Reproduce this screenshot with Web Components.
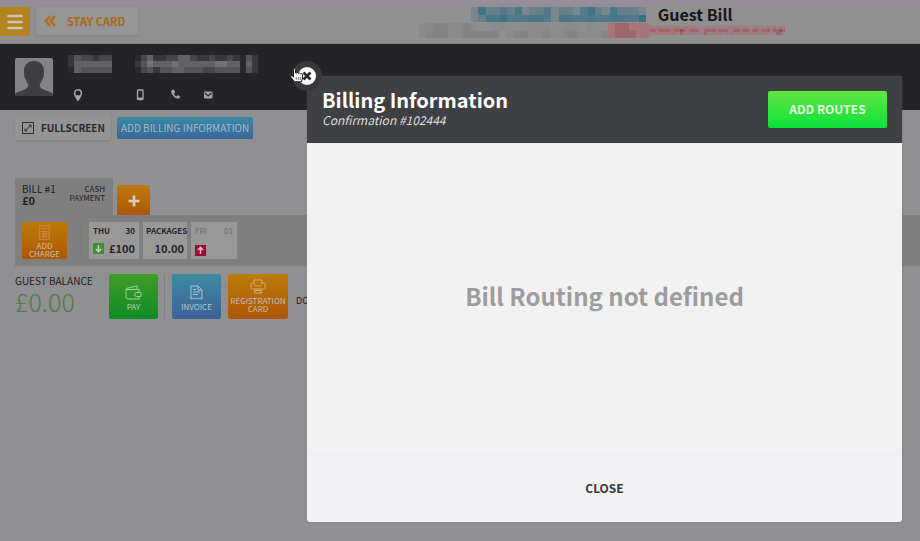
<!DOCTYPE html>
<html lang="en">
<head>
<meta charset="utf-8">
<title>Guest Bill</title>
<style>
html, body { height: 100%; }
body { margin: 0; background: #909092; color: #202022; font-family: "Noto Sans CJK SC", "Open Sans", sans-serif; overflow: hidden; }
</style>
</head>
<body>
<bill-page></bill-page>
<script>
const define = (name, html, setup) => {
  const template = document.createElement('template');
  template.innerHTML = '<style>*{box-sizing:border-box}button{font:inherit;color:inherit;border:0;margin:0;padding:0;cursor:pointer}svg{display:block}</style>' + html;
  customElements.define(name, class extends HTMLElement {
    constructor() {
      super();
      this.attachShadow({ mode: 'open' }).append(template.content.cloneNode(true));
    }
    connectedCallback() { if (setup) setup(this); }
  });
};

/* Redacted text: a grid of cells, one palette letter each, rows split by "/". */
const palette = {
  a: '#29292b', b: '#38383a', c: '#474648', d: '#545355', e: '#626163', f: '#737274',
  A: '#3f7480', B: '#4a7886', C: '#55798a', D: '#667f8b', E: '#7a868b', F: '#2f7487',
  g: '#8a8a8a', h: '#858584', i: '#8f8c91', r: '#a0666e', s: '#a6767c', t: '#94525c', u: '#9a8088'
};
define('pixel-mosaic', '<style>:host{display:block}svg{width:100%;height:100%}</style><svg preserveAspectRatio="none" shape-rendering="crispEdges" aria-hidden="true"></svg>', el => {
  const rows = el.getAttribute('cells').split('/');
  const svg = el.shadowRoot.querySelector('svg');
  svg.setAttribute('viewBox', '0 0 ' + rows[0].length + ' ' + rows.length);
  svg.innerHTML = rows.map((row, y) => [...row].map((c, x) =>
    palette[c] ? `<rect x="${x}" y="${y}" width="1" height="1" fill="${palette[c]}"/>` : '').join('')).join('');
});

define('app-header', `
<style>
:host{display:flex;align-items:flex-start;height:44px;padding-top:6px;border-top:1px solid #9a86a6;border-bottom:1px solid #838384;background:linear-gradient(#948f96,#909091 5px)}
.menu{width:30px;height:29px;background:#b58420;border-radius:0 2px 2px 0;display:grid;place-items:center}
.back{display:flex;align-items:center;gap:11px;height:28px;margin-left:6px;padding:0 13px 0 8px;background:#969697;border-radius:3px;box-shadow:0 1px 2px #7779;color:#a9690f;font-size:11px;font-weight:700;line-height:16px}
.who{flex:1;margin-left:145px;display:flex;flex-direction:column;align-items:center;margin-top:-3px}
.row{display:flex;gap:12px;align-items:center;height:20px}
h1{margin:0;font-size:16px;line-height:20px;font-weight:700;color:#171719}
.blue{width:175px;height:15px}
.warn{display:flex;align-items:flex-start;height:16px;margin-top:-1px}
.grey{width:189px;height:15px}.pink{width:42px;height:15px}.red{width:135px;height:9px;margin-top:3px}
</style>
<button class="menu" aria-label="Menu"><svg width="16" height="16" viewBox="0 0 16 16" stroke="#c9c4b4" stroke-width="2.6" stroke-linecap="round"><path d="M1.5 2h13M1.5 8h13M1.5 14h13"/></svg></button>
<button class="back"><svg width="12" height="12" viewBox="0 0 12 12" fill="none" stroke="#b4700f" stroke-width="2.4"><path d="M6 1L1.600 6 6 11M11 1L6.600 6 11 11"/></svg>STAY CARD</button>
<div class="who">
<div class="row"><pixel-mosaic class="blue" cells="EADDCDBEDDCEDDECADEBDDDE/EDBBACCCBBCEBBCCBCCBBCCF"></pixel-mosaic><h1>Guest Bill</h1></div>
<div class="warn"><pixel-mosaic class="grey" cells="gghhgghgiiggiiggggiiggigii/ghhhgghhhhh.ghhgghgghhggghi"></pixel-mosaic><pixel-mosaic class="pink" cells="srrsss/srrrss"></pixel-mosaic><pixel-mosaic class="red" cells="sussususssussusuuuusususuusussusuuusuuusususu/rrsrrrrsrrtrsrrrsurrrrsrrrusrrsrrurrsrrrurrtr/ussssusssurussusuuruusssusususuussssuusuuurru"></pixel-mosaic></div>
</div>`);

define('guest-banner', `
<style>
:host{display:flex;gap:15px;height:66px;padding:14px 15px 0;background:#242426}
.avatar{width:38px;height:38px;border-radius:2px;flex:none}
.names{display:flex;gap:23px;margin-top:-3px;height:18px}
.first{width:44px}.last{width:123px}
.contact{margin:15px 0 0 4px}
</style>
<svg class="avatar" viewBox="0 0 38 38" role="img" aria-label="Guest photo"><rect width="38" height="38" fill="#858386"/><path d="M0 38v-2c2-3 10-3 13-7 1-2-1-4-2-7-2-3-2-5-2-9 0-6 4-10 10-10s10 4 10 10c0 4 0 6-2 9-1 3-3 5-2 7 3 4 11 4 13 7v2z" fill="#3e3f42"/></svg>
<div>
<div class="names"><pixel-mosaic class="first" cells="bdccbcc/beeeeee/aeddddd"></pixel-mosaic><pixel-mosaic class="last" cells="acebbcceecbbcbbcbadb/bdfeeefeeeeeeffeeaeb/acdbddeedddccddddadb"></pixel-mosaic></div>
<svg class="contact" width="160" height="14" viewBox="0 0 160 14" fill="none" stroke="#a6a6a7" stroke-width="1.500" aria-label="Contact details" role="img">
<path d="M6 1.800c-2 0-3.400 1.400-3.400 3.200C2.600 7.500 6 12 6 12s3.400-4.500 3.400-7C9.400 3.200 8 1.800 6 1.800z"/><path d="M4.500 8L6 11.500 7.500 8z" fill="#a6a6a7"/>
<rect x="65.500" y="2" width="5.500" height="9.600" rx=".8" stroke-width="1.300"/><path d="M65.500 10.600h5.500" stroke-width="2"/>
<path d="M99 2.500c.5 4.500 3.500 8 8 8.200l1.200-2.500-2.600-1-1.200 1.200c-1.400-.7-2-1.500-2.500-3l1.200-1.200-1.200-2.600z" fill="#a6a6a7" stroke="none"/>
<rect x="132" y="3.500" width="8.500" height="7" rx="1" fill="#a6a6a7" stroke="none"/><path d="M132.800 5l3.400 3 3.400-3" stroke="#242426" stroke-width="1.100"/>
</svg>
</div>`);

define('bill-toolbar', `
<style>
:host{display:flex;gap:6px;padding:6px 15px;align-items:center}
button{display:flex;align-items:center;height:24px;border-radius:2px;line-height:16px}
.full{gap:7px;padding:0 6px 0 7px;background:#949495;box-shadow:0 1px 2px #7778;font-size:10px;font-weight:700;color:#28282a}
.add{height:22px;padding:0 4px;background:linear-gradient(#3c87a2,#38689a);color:#a5bac8;font-size:10px;font-weight:400}
</style>
<button class="full"><svg width="12" height="12" viewBox="0 0 12 12" fill="none" stroke="#303032"><rect x=".5" y=".5" width="11" height="11"/><path d="M3 9l6-6M6.500 3H9v2.500M3 6.500V9h2.500"/></svg>FULLSCREEN</button>
<button class="add">ADD BILLING INFORMATION</button>`);

define('tile-button', `
<style>
:host{display:block;flex:none;height:45px;width:49px}
button{width:100%;height:100%;border-radius:2px;display:flex;flex-direction:column;align-items:center;justify-content:flex-start;padding-top:8px;gap:3px;font-size:8px;line-height:8px;color:#c9bfb0;background:linear-gradient(#bc7b08,#ad5606)}
:host([tone=green]) button{background:linear-gradient(#429b26,#0d8c26);color:#b1cfb1;padding-top:11px;gap:3px}
:host([tone=blue]) button{background:linear-gradient(#3d8ba2,#3c6296);color:#b4c5d1;padding-top:11px;gap:3px}
:host([tone=wide]){width:60px}
:host([tone=wide]) button{padding-top:5px}
:host([tone=charge]){width:45px;height:37px}
:host([tone=charge]) button{padding-top:3px;gap:2px}
:host([tone=plus]){width:33px;height:30px}
:host([tone=plus]) button{padding-top:10px;border-radius:2px 2px 0 0}
</style>
<button><slot name="icon"></slot><span><slot></slot></span></button>`);

define('day-card', `
<style>
:host{display:flex;flex-direction:column;justify-content:space-between;flex:none;width:50px;height:37px;padding:2px 4px 3px;background:#989899;color:#242426;font-size:8px;line-height:13px;font-weight:700;border-radius:1px}
:host([faded]){color:#6f6f70;font-weight:400;width:46px}
:host([narrow]){width:44px;padding-left:3px;padding-right:3px}
div{display:flex;justify-content:space-between}
.amount{font-size:11px;line-height:16px}
</style>
<div><slot name="day"></slot><slot name="date"></slot></div>
<div class="amount"><span><slot name="flag"></slot></span><span><slot></slot></span></div>`);

define('bill-panel', `
<style>
:host{display:block;padding:32px 0 0 15px}
.tabs{display:flex;align-items:flex-end;gap:4px;height:37px}
.tab{display:flex;justify-content:space-between;width:98px;height:37px;padding:5px 8px 0 7px;background:#7f7f80;color:#202022;text-align:left;font-size:10px;line-height:12px}
.tab b{display:block;font-size:11px;font-weight:700;line-height:11px}
.tab .type{text-align:right;font-size:8px;line-height:9px;padding-top:1px}
.body{display:flex;gap:4px;height:51px;padding:7px;background:#7f7f80}
hr{border:0;margin:0 3px 0 10px;width:1px;height:37px;background:#767677}
.flag{width:11px;height:11px;margin-top:3px}
</style>
<div class="tabs">
<button class="tab"><span>BILL #1<b>£0</b></span><span class="type">CASH<br>PAYMENT</span></button>
<tile-button tone="plus"><svg slot="icon" width="12" height="12" viewBox="0 0 12 12" stroke="#d6cec0" stroke-width="2.600" role="img" aria-label="Add bill"><path d="M6 .5v11M.5 6h11"/></svg></tile-button>
</div>
<div class="body">
<tile-button tone="charge"><svg slot="icon" width="11" height="15" viewBox="0 0 11 15" fill="none" stroke="#c98c48"><rect x=".8" y=".8" width="9.400" height="13.400"/><path d="M2.500 3.500h6M2.500 6.500h6M2.500 9h6M2.500 11.500h6M4.500 5.500v7M7 5.500v7"/></svg>ADD<br>CHARGE</tile-button>
<hr>
<day-card><span slot="day">THU</span><span slot="date">30</span><svg class="flag" slot="flag" viewBox="0 0 11 11" fill="none" stroke="#c4d6c0" stroke-width="1.500"><rect width="11" height="11" fill="#3d8f35" stroke="none"/><path d="M5.500 2v6.500M2.800 6l2.700 2.700L8.200 6"/></svg>£100</day-card>
<day-card narrow><span slot="day">PACKAGES</span>10.00</day-card>
<day-card faded><span slot="day">FRI</span><span slot="date">01</span><svg class="flag" slot="flag" viewBox="0 0 11 11" fill="none" stroke="#d9bcc4" stroke-width="1.500"><rect width="11" height="11" fill="#a3082e" stroke="none"/><path d="M5.500 9V2.500M2.800 5l2.700-2.700L8.200 5"/></svg></day-card>
</div>`);

define('guest-balance', `
<style>
:host{display:flex;padding:8px 15px;white-space:nowrap}
.sum{width:94px;font-size:10px;line-height:13px;flex:none}
.sum strong{display:block;font-size:25px;line-height:28px;font-weight:300;color:#4e7b4a}
hr{border:0;margin:0 7px 0 6px;width:1px;height:45px;background:#818182;flex:none}
.gap{margin-right:7px}
.docs{margin-left:8px;font-size:9px;line-height:14px;padding-top:20px}
</style>
<div class="sum">GUEST BALANCE<strong>£0.00</strong></div>
<tile-button tone="green"><svg slot="icon" width="17" height="15" viewBox="0 0 17 15" fill="none" stroke="#a9cfa1"><path d="M1 4.500h13v3M14 11.500V14H3c-1.300 0-2-.7-2-2V4.500C1 3.500 2 3 3 3l9-2.200V4M16 7.500h-4.500c-2.500 0-2.500 4 0 4H16z"/></svg>PAY</tile-button>
<hr>
<tile-button tone="blue" class="gap"><svg slot="icon" width="13" height="15" viewBox="0 0 13 15" fill="none" stroke="#a9c4d4"><path d="M1 1h7l4 4v9l-2-1-2 1-1.500-1L5 14l-2-1-2 1zM8 1v4h4M3 4.500h3M3 7h7M3 9.500h5"/></svg>INVOICE</tile-button>
<tile-button tone="wide"><svg slot="icon" width="16" height="15" viewBox="0 0 16 15" fill="none" stroke="#d0ad79"><path d="M4 5V1h8v4M4 4H2.500C1.500 4 1 4.500 1 5.500v3c0 1 .5 1.500 1.500 1.500h11c1 0 1.500-.5 1.500-1.500v-3c0-1-.5-1.500-1.500-1.500H12M4 5.500c0 2 8 2 8 0M4.500 11.500h7V14h-7z"/></svg>REGISTRATION<br>CARD</tile-button>
<span class="docs">DO</span>`);

define('billing-dialog', `
<style>
:host{position:absolute;inset:76px 18px 19px 307px;display:flex;flex-direction:column;background:#f2f1f3;border-radius:0 2px 3px 3px;box-shadow:0 0 2px #6668}
header{display:flex;align-items:center;justify-content:space-between;height:67px;padding:0 15px;background:#3f4043;color:#fff;flex:none}
h2{margin:0;font-size:20px;line-height:24px;font-weight:700}
p{margin:0 0 4px;font-size:12px;line-height:16px;font-style:italic;color:#dededf}
.routes{width:119px;height:37px;border-radius:2px;background:linear-gradient(#62e543,#0be23a);color:#e6fbe0;font-size:12px;font-weight:700;line-height:16px;padding-bottom:2px}
main{flex:1;display:grid;place-items:center;padding-bottom:6px;font-size:24px;line-height:32px;font-weight:700;color:#9d9c9e;background:#f2f2f3}
footer{height:67px;flex:none;display:grid;place-items:center;padding-bottom:2px;border-top:1px solid #efedf0}
footer button{background:none;padding:8px 16px;font-size:12px;line-height:16px;font-weight:700;color:#38383c}
.x{position:absolute;left:-15px;top:-15px;width:30px;height:30px;border-radius:50%;background:#38393c;display:grid;place-items:center}
.hand{position:absolute;left:-17px;top:-8px}
</style>
<header><div><h2>Billing Information</h2><p>Confirmation #102444</p></div><button class="routes">ADD ROUTES</button></header>
<main>Bill Routing not defined</main>
<footer><button>CLOSE</button></footer>
<button class="x" aria-label="Close dialog"><svg width="18" height="18" viewBox="0 0 18 18"><circle cx="9" cy="9" r="9" fill="#fff"/><path d="M5.500 5.500l7 7M12.500 5.500l-7 7" stroke="#2b2b2e" stroke-width="2.800"/></svg></button>
<svg class="hand" width="15" height="15" viewBox="0 0 15 15"><path d="M3.500 1.500c0-1.300 2-1.300 2 0V5h1c.5-.8 1.700-.6 2 .3.700-.5 1.700-.3 2 .5.900-.4 2 0 2 1.200V10l-1 3.800H4.500L1 9.500C.2 8.300 1.300 7.300 2.300 8l1.200 1z" fill="#fff" stroke="#1a1a1c"/><path d="M6.200 9v3M8.400 9v3M10.500 9v3" stroke="#555" stroke-width=".8"/></svg>`);

define('bill-page', `
<style>
:host{display:block;position:relative;min-height:100%;height:100vh;overflow:hidden}
</style>
<app-header></app-header><guest-banner></guest-banner><bill-toolbar></bill-toolbar><bill-panel></bill-panel><guest-balance></guest-balance><billing-dialog role="dialog" aria-label="Billing Information"></billing-dialog>`);
</script>
</body>
</html>
